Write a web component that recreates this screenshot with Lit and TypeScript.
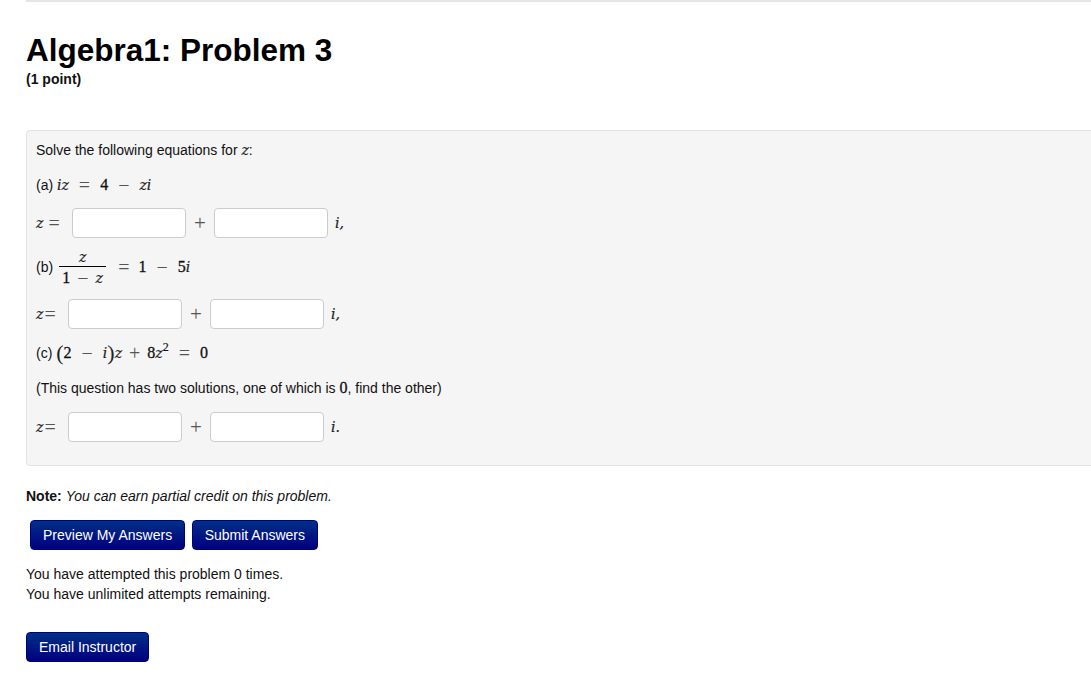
import { LitElement, html, css } from "lit";
import { customElement } from "lit/decorators.js";

@customElement("app-root")
export class AppRoot extends LitElement {
  static styles = css`
    :host { display: block; height: 683px; overflow: hidden; font-family: "Liberation Sans", Arial, sans-serif; font-size: 14px; color: #111; background: #fff; }
    .page { margin-left: 26px; margin-right: -10px; border-top: 2px solid #e6e6e6; }
    h1 { margin: 31px 0 0; font-size: 31.5px; line-height: 35px; font-weight: 700; color: #000; }
    .points { margin-top: 1px; font-size: 14px; line-height: 20px; font-weight: 700; color: #111; }
    .box { box-sizing: border-box; height: 336px; margin-top: 41px; padding: 9px 9px; background: #f5f5f5; border: 1px solid #e3e3e3; border-radius: 4px; }
    .line { display: flex; align-items: center; height: 20px; white-space: pre; }
    .m { font-family: "Liberation Serif", serif; font-size: 16px; color: #111; display: inline-flex; align-items: center; }
    .v { font-family: "DejaVu Serif", serif; font-size: 14px; font-style: italic; color: #222; -webkit-text-stroke: 0.2px #222; }
    .n { font-family: "Liberation Serif", serif; font-size: 16px; -webkit-text-stroke: 0.3px #111; }
    .op { font-family: "Liberation Serif", serif; font-size: 20px; color: #555; }
    .sp4 { margin: 0 10px; }
    .row { display: flex; align-items: center; height: 30px; }
    input { box-sizing: border-box; width: 114px; height: 30px; padding: 0; background: #fff; border: 1px solid #ccc; border-radius: 4px; }
    .plus { width: 28px; text-align: center; font-size: 21px; font-family: "Liberation Serif", serif; color: #555; font-weight: 400; }
    .zeq { display: flex; align-items: center; }
    .eq { font-family: "Liberation Serif", serif; font-size: 20px; color: #555; }
    .zeq-wide { width: 36px; }
    .zeq-tight { width: 32px; }
    .eq-wide { margin-left: 5px; }
    .eq-tight { margin-left: 1px; }
    .tail { margin-left: 7px; font-family: "DejaVu Serif", serif; font-size: 14px; font-style: italic; color: #222; -webkit-text-stroke: 0.2px #222; }
    .a { margin-top: 15px; }
    .rowa { margin-top: 13px; }
    .b { margin-top: 7px; height: 44px; }
    .rowb { margin-top: 10px; }
    .c { margin-top: 14px; }
    .d { margin-top: 15px; }
    .rowc { margin-top: 14px; }
    .frac { display: inline-flex; flex-direction: column; align-items: center; width: 47px; margin: 0 12px 0 6px; }
    .fn { height: 20px; line-height: 22px; border-bottom: 1px solid #000; width: 100%; text-align: center; }
    .fd { height: 22px; line-height: 20px; display: flex; align-items: center; }
    .mn { margin: 0 7px; }
    .gap-s { margin-left: 9px; }
    .big { font-size: 22px; color: #222; }
    sup { font-family: "Liberation Serif", serif; font-size: 12px; -webkit-text-stroke: 0.2px #111; line-height: 0; position: relative; top: -6px; vertical-align: baseline; }
    .note { margin-top: 20px; line-height: 20px; }
    .note em { font-style: italic; }
    .btns { display: flex; gap: 7px; margin: 14px 0 0 4px; }
    button { box-sizing: border-box; height: 30px; padding: 0 12px; font: 14px "Liberation Sans", Arial, sans-serif; color: #fff; background: linear-gradient(#003087, #00007f); border: 1px solid #00007a; border-radius: 4px; }
    .submit { padding: 0 11.5px; }
    .status { margin-top: 14px; line-height: 20px; }
    .email { margin-top: 28px; display: block; }
  `;

  private ans(z: string, tail: string, wide: boolean) {
    return html`<div class="row">
      <span class="zeq ${wide ? "zeq-wide" : "zeq-tight"}"><span class="v">z</span><span class="eq ${wide ? "eq-wide" : "eq-tight"}">=</span></span>
      <input type="text" aria-label="${z} real" />
      <span class="plus">+</span>
      <input type="text" aria-label="${z} imaginary" />
      <span class="tail">${tail}</span>
    </div>`;
  }

  render() {
    return html`<div class="page">
      <h1>Algebra1: Problem 3</h1>
      <div class="points">(1 point)</div>
      <div class="box">
        <div class="line">Solve the following equations for <span class="v">z</span>:</div>
        <div class="line a">(a) <span class="m"><span class="v">iz</span><span class="op sp4">=</span><span class="n">4</span><span class="op sp4">−</span><span class="v">zi</span></span></div>
        <div class="rowa">${this.ans("a", "i,", true)}</div>
        <div class="line b">(b)<span class="frac m"><span class="fn v">z</span><span class="fd"><span class="n">1</span><span class="op mn">−</span><span class="v">z</span></span></span><span class="m"><span class="op">=</span><span class="n gap-s">1</span><span class="op sp4">−</span><span class="n">5</span><span class="v">i</span></span></div>
        <div class="rowb">${this.ans("b", "i,", false)}</div>
        <div class="line c">(c) <span class="m"><span class="big">(</span><span class="n">2</span><span class="op sp4">−</span><span class="v">i</span><span class="big">)</span><span class="v">z</span><span class="op mn">+</span><span class="n">8</span><span class="v">z</span><sup>2</sup><span class="op sp4">=</span><span class="n">0</span></span></div>
        <div class="line d">(This question has two solutions, one of which is <span class="n">0</span>, find the other)</div>
        <div class="rowc">${this.ans("c", "i.", false)}</div>
      </div>
      <div class="note"><b>Note:</b> <em>You can earn partial credit on this problem.</em></div>
      <div class="btns"><button>Preview My Answers</button><button class="submit">Submit Answers</button></div>
      <div class="status">You have attempted this problem 0 times.<br />You have unlimited attempts remaining.</div>
      <button class="email">Email Instructor</button>
    </div>`;
  }
}
